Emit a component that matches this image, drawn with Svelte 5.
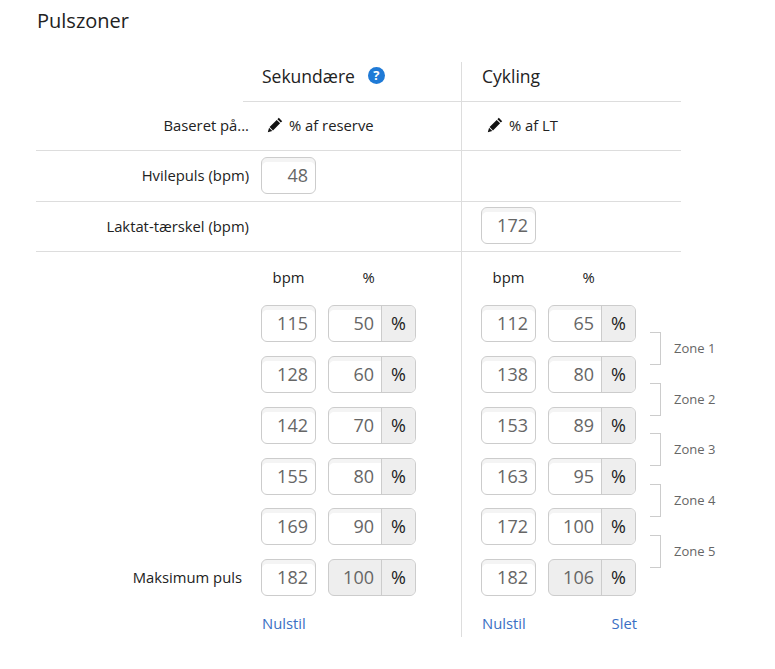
<script>
  const sekundaer = [
    { bpm: 115, pct: 50 },
    { bpm: 128, pct: 60 },
    { bpm: 142, pct: 70 },
    { bpm: 155, pct: 80 },
    { bpm: 169, pct: 90 },
    { bpm: 182, pct: 100, max: true }
  ];
  const cykling = [
    { bpm: 112, pct: 65 },
    { bpm: 138, pct: 80 },
    { bpm: 153, pct: 89 },
    { bpm: 163, pct: 95 },
    { bpm: 172, pct: 100 },
    { bpm: 182, pct: 106, max: true }
  ];
  const zones = ['Zone 1', 'Zone 2', 'Zone 3', 'Zone 4', 'Zone 5'];
</script>

{#snippet pencil()}
  <svg class="pencil" viewBox="0 0 16 16" width="16" height="16">
    <path d="M11.8 .8 15.2 4.2 13.8 5.6 10.4 2.2ZM9.7 2.9 13.1 6.3 6 13.4 2.6 10Z" fill="#111" />
    <path d="M2.1 10.7 5.3 13.9 .8 15.2Z" fill="#111" />
  </svg>
{/snippet}

{#snippet zoneRows(rows)}
  {#each rows as row}
    <div class="pair">
      <div class="box bpm">{row.bpm}</div>
      <div class="box group" class:locked={row.max}>
        <span class="val">{row.pct}</span>
        <span class="addon">%</span>
      </div>
    </div>
  {/each}
{/snippet}

<div class="page">
  <h1>Pulszoner</h1>

  <div class="table">
    <div class="row head">
      <div class="label"></div>
      <div class="cell"><span class="title">Sekundære</span><span class="help">?</span></div>
      <div class="cell right"><span class="title">Cykling</span></div>
    </div>

    <div class="row basis">
      <div class="label">Baseret på...</div>
      <div class="cell">{@render pencil()} % af reserve</div>
      <div class="cell right">{@render pencil()} % af LT</div>
    </div>

    <div class="row single">
      <div class="label">Hvilepuls (bpm)</div>
      <div class="cell"><div class="box bpm">48</div></div>
      <div class="cell right"></div>
    </div>

    <div class="row single last">
      <div class="label">Laktat-tærskel (bpm)</div>
      <div class="cell"></div>
      <div class="cell right"><div class="box bpm">172</div></div>
    </div>

    <div class="row zones-row">
      <div class="label max-label"><span>Maksimum puls</span></div>
      <div class="cell column">
        <div class="units"><span>bpm</span><span>%</span></div>
        {@render zoneRows(sekundaer)}
        <div class="links"><a href="#reset">Nulstil</a></div>
      </div>
      <div class="cell right column">
        <div class="units"><span>bpm</span><span>%</span></div>
        {@render zoneRows(cykling)}
        <div class="links"><a href="#reset">Nulstil</a><a href="#delete" class="del">Slet</a></div>
        <div class="zones">
          {#each zones as zone}
            <div class="zone"><span>{zone}</span></div>
          {/each}
        </div>
      </div>
    </div>
  </div>
</div>

<style>
  :global(body) {
    background: #fff;
    font-family: "Open Sans", sans-serif;
    font-size: 14.8px;
    color: #222;
  }
  .page {
    padding: 8px 0 0 36px;
  }
  h1 {
    margin: 0;
    font-size: 20px;
    font-weight: 400;
    line-height: 26px;
    padding-left: 1px;
    color: #222;
  }
  .table {
    margin-top: 28px;
    width: 645px;
  }
  .row {
    display: grid;
    grid-template-columns: 207px 218px 220px;
    border-bottom: 1px solid #ddd;
  }
  .label {
    margin-right: -6px;
    text-align: right;
    align-self: center;
    color: #222;
  }
  .cell {
    padding-left: 18px;
    display: flex;
    align-items: center;
  }
  .cell.right {
    border-left: 1px solid #ddd;
    padding-left: 19px;
  }
  .head {
    height: 40px;
    border-bottom: none;
  }
  .head .cell {
    border-bottom: 1px solid #ddd;
    font-size: 17.5px;
    padding-bottom: 12px;
    color: #222;
  }
  .title {
    margin-left: 1px;
  }
  .help {
    display: inline-block;
    width: 17px;
    height: 17px;
    margin-left: 13px;
    border-radius: 50%;
    background: #1f7ad6;
    color: #fff;
    font-size: 13px;
    font-weight: 700;
    line-height: 17px;
    text-align: center;
  }
  .basis {
    height: 48px;
  }
  .basis .cell,
  .basis .label {
    padding-bottom: 2px;
  }
  .basis .cell {
    padding-left: 24px;
  }
  .basis .cell.right {
    padding-left: 25px;
  }
  .pencil {
    margin-right: 6px;
    flex: none;
  }
  .single {
    height: 50px;
  }
  .single.last {
    height: 49px;
  }
  .single .cell,
  .single .label {
    padding-bottom: 2px;
  }
  .box {
    box-sizing: border-box;
    height: 37px;
    border: 1px solid #ccc;
    border-radius: 6px;
    box-shadow: inset 0 4px 0 #f4f4f4;
    color: #666;
    font-size: 18px;
    line-height: 35px;
    background: #fff;
  }
  .bpm {
    width: 55px;
    padding-right: 7px;
    text-align: right;
    flex: none;
  }
  .zones-row {
    border-bottom: none;
    height: 385px;
  }
  .max-label {
    align-self: start;
    margin-right: 1px;
    padding-top: 315px;
  }
  .column {
    flex-direction: column;
    align-items: flex-start;
    position: relative;
  }
  .units {
    display: flex;
    height: 50px;
    padding-bottom: 3px;
    align-items: center;
    font-size: 14.8px;
  }
  .units span:first-child {
    width: 55px;
    text-align: center;
  }
  .units span:last-child {
    width: 88px;
    margin-left: 12px;
    text-align: center;
    padding-right: 7px;
    box-sizing: border-box;
  }
  .pair {
    display: flex;
    gap: 12px;
    margin-bottom: 13.85px;
  }
  .group {
    display: flex;
    width: 88px;
    overflow: hidden;
  }
  .val {
    flex: 1;
    text-align: right;
    padding-right: 7px;
  }
  .addon {
    box-sizing: border-box;
    width: 34px;
    flex: none;
    border-left: 1px solid #ccc;
    background: #eee;
    text-align: center;
    font-size: 18px;
    color: #222;
  }
  .locked {
    background: #eee;
    box-shadow: none;
  }
  .links {
    display: flex;
    box-sizing: border-box;
    width: 156px;
    padding-left: 1px;
    justify-content: space-between;
    margin-top: 3px;
    line-height: 20px;
  }
  .links a {
    color: #3a6fc4;
    text-decoration: none;
  }
  .zones {
    position: absolute;
    left: 188px;
    top: 80px;
    width: 90px;
    display: flex;
    flex-direction: column;
    gap: 17.7px;
  }
  .zone {
    box-sizing: border-box;
    width: 11px;
    height: 33px;
    border: 1px solid #ccc;
    border-left: none;
    position: relative;
  }
  .zone span {
    position: absolute;
    left: 24px;
    top: 6px;
    font-size: 13px;
    color: #666;
    white-space: nowrap;
  }
</style>
